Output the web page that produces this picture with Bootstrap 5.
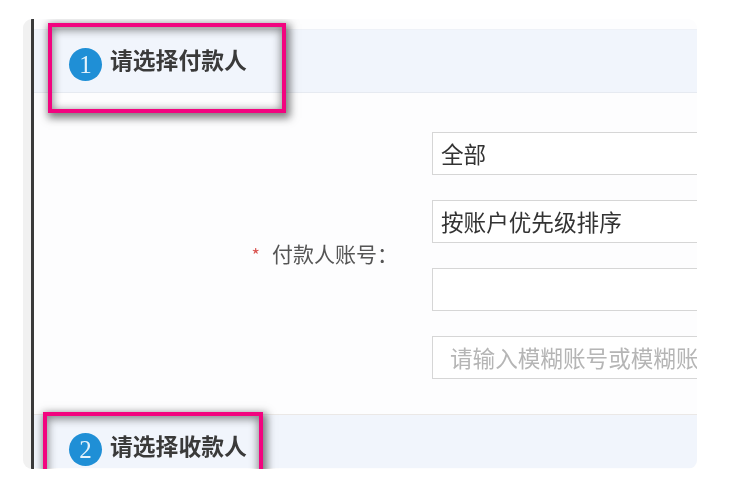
<!DOCTYPE html>
<html lang="zh">
<head>
<meta charset="utf-8">
<title>请选择付款人</title>
<link href="https://cdn.jsdelivr.net/npm/bootstrap@5.3.0/dist/css/bootstrap.min.css" rel="stylesheet">
<style>
html,body{background:#fff;height:100%;overflow:hidden}
body{font-family:"Noto Sans CJK SC","Liberation Sans",sans-serif;color:#333}
.shot{width:674px;height:450px;margin:19px 0 0 23px;border-radius:9px;overflow:hidden;background:#fdfdfe;position:relative}
.strip{width:8px;background:#f1f1f1;flex:none}
.rule{width:3px;background:#3a3a3a;flex:none}
.pane{min-width:0;padding-top:10px}
.band{background:#f1f5fc;border-top:1px solid #eef1f7;padding-left:35px;gap:8px;font-size:22.8px;font-weight:700;color:#3a3a3a;line-height:1}
.band-one{height:64px;border-bottom:1px solid #e6eaf1;padding-top:9px;align-items:flex-start}
.band-one .title{padding-top:10px}
.band-two{height:54px;border-top:1px solid #ebe8e6;padding-top:18px;align-items:flex-start}
.band-two .title{padding-top:2px}
.num{width:33px;height:33px;border-radius:50%;background:#1f8fd6;color:#e4f2fb;font:400 25px/33px "Liberation Serif",serif;text-align:center;flex:none;margin-top:9px}
.band-two .num{margin-top:0}
.band-one .num{margin-top:9px}
.band-one{padding-top:9px}
.form-zone{height:321px;padding-top:39px}
.who{width:364px;flex:none;padding-top:107px;font-size:21px;line-height:1.4;color:#555}
.who .star{color:#d9534f;margin-right:12px;font-size:18px}
.who .colon{font-family:"Noto Sans CJK TC",sans-serif}
.fields{width:520px;flex:none;gap:25px;margin-left:34px}
.fields .form-control{height:43px;border:1.5px solid #d6d6d6;border-radius:0;padding:0 8px;font-size:22.6px;color:#333;background:#fff;box-shadow:none;font-family:inherit}
.fields .form-control::placeholder{color:#b5b5b5;opacity:1}
.fields .hint{padding-left:17px}
.callout{position:absolute;border:4.5px solid #f2047f;box-shadow:2px 3px 8px 2px rgba(40,40,40,.6),inset 0 2px 8px 1px rgba(40,40,40,.55)}
.callout-one{left:25px;top:4px;width:238px;height:90px}
.callout-two{left:20px;top:393px;width:220px;height:70px}
.soft{filter:blur(.45px)}
</style>
</head>
<body>
<div class="shot d-flex">
  <div class="strip"></div>
  <div class="rule"></div>
  <div class="pane flex-grow-1 soft">
    <div class="band band-one d-flex"><span class="num">1</span><span class="title">请选择付款人</span></div>
    <div class="form-zone d-flex">
      <div class="who text-end"><span class="star">*</span>付款人账号<span class="colon">：</span></div>
      <div class="fields d-flex flex-column">
        <input class="form-control" type="text" value="全部" aria-label="账户范围">
        <input class="form-control" type="text" value="按账户优先级排序" aria-label="排序方式">
        <input class="form-control" type="text" aria-label="付款人账号">
        <input class="form-control hint" type="text" placeholder="请输入模糊账号或模糊账号名称" aria-label="模糊查询">
      </div>
    </div>
    <div class="band band-two d-flex"><span class="num">2</span><span class="title">请选择收款人</span></div>
  </div>
  <div class="callout callout-one"></div>
  <div class="callout callout-two"></div>
</div>
<script src="https://cdn.jsdelivr.net/npm/bootstrap@5.3.0/dist/js/bootstrap.bundle.min.js"></script>
</body>
</html>
